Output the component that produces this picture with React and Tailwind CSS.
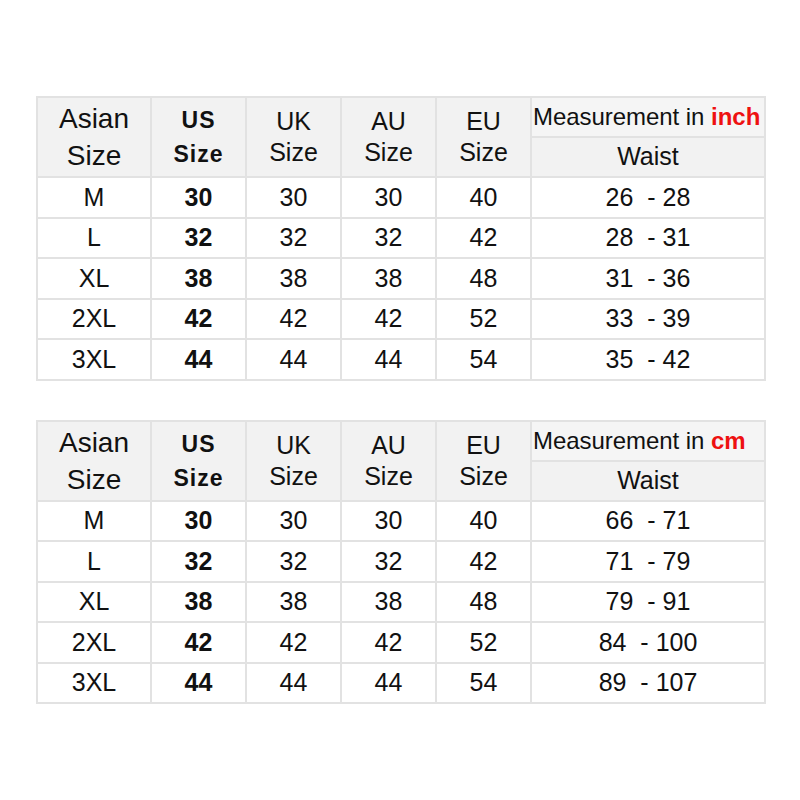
const ROWS_INCH = [
  ["M", "30", "30", "30", "40", "26  - 28"],
  ["L", "32", "32", "32", "42", "28  - 31"],
  ["XL", "38", "38", "38", "48", "31  - 36"],
  ["2XL", "42", "42", "42", "52", "33  - 39"],
  ["3XL", "44", "44", "44", "54", "35  - 42"],
];

const ROWS_CM = [
  ["M", "30", "30", "30", "40", "66  - 71"],
  ["L", "32", "32", "32", "42", "71  - 79"],
  ["XL", "38", "38", "38", "48", "79  - 91"],
  ["2XL", "42", "42", "42", "52", "84  - 100"],
  ["3XL", "44", "44", "44", "54", "89  - 107"],
];

const cell = "border-2 border-[#e2e2e2] text-center align-middle p-0";

function SizeTable({ unit, rows }) {
  return (
    <table className="border-collapse table-fixed w-[728px] text-[#111]">
      <colgroup>
        <col className="w-[114px]" />
        <col className="w-[95px]" />
        <col className="w-[95px]" />
        <col className="w-[95px]" />
        <col className="w-[95px]" />
        <col className="w-[234px]" />
      </colgroup>
      <thead>
        <tr className="h-[40px]">
          <th rowSpan={2} className={`${cell} bg-[#f2f2f2] font-normal text-[28px] leading-[37px]`}>
            Asian<br />Size
          </th>
          <th rowSpan={2} className={`${cell} bg-[#f2f2f2] font-bold text-[23px] leading-[34px] tracking-[1px]`}>
            US<br />Size
          </th>
          {["UK", "AU", "EU"].map(h => (
            <th key={h} rowSpan={2} className={`${cell} bg-[#f2f2f2] font-normal text-[25px] leading-[31px]`}>
              {h}<br />Size
            </th>
          ))}
          <th className={`${cell} bg-[#f5f5f5] font-normal text-[24px] tracking-[-0.05px] whitespace-nowrap text-left pl-[1px] overflow-visible`}>
            Measurement in <span className="text-[#ee1111] font-bold tracking-[0px]">{unit}</span>
          </th>
        </tr>
        <tr className="h-[40px]">
          <th className={`${cell} bg-[#f2f2f2] font-normal text-[25px]`}>Waist</th>
        </tr>
      </thead>
      <tbody>
        {rows.map(r => (
          <tr key={r[0]} className="h-[40.5px]">
            {r.map((v, i) => (
              <td
                key={i}
                className={`${cell} text-[25px] whitespace-pre ${i === 1 ? "font-bold" : ""}`}
              >
                {v}
              </td>
            ))}
          </tr>
        ))}
      </tbody>
    </table>
  );
}

export default function App() {
  return (
    <div className="w-[800px] h-[800px] bg-white pt-[96px] pl-[36px] font-['Liberation_Sans',Arial,sans-serif]">
      <div className="flex flex-col gap-[39px]">
        <SizeTable unit="inch" rows={ROWS_INCH} />
        <SizeTable unit="cm" rows={ROWS_CM} />
      </div>
    </div>
  );
}
